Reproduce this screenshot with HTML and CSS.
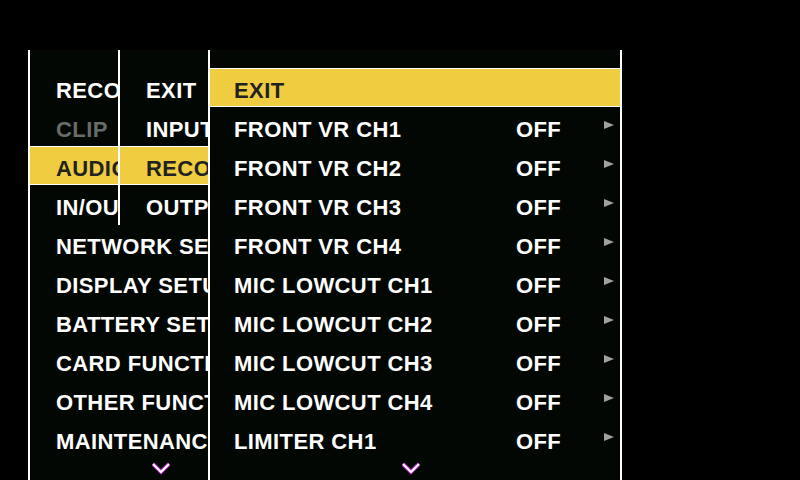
FILE: index.html
```html
<!DOCTYPE html>
<html lang="en">
<head>
    <meta charset="UTF-8">
    <title>Audio Menu</title>
    <link rel="stylesheet" href="styles.css">
</head>
<body>
    <div class="screen">
        <!-- top level menu -->
        <div class="panel panel-main">
            <ul class="menu">
                <li>RECORDING SETUP</li>
                <li class="dim">CLIP</li>
                <li class="sel">AUDIO SETUP</li>
                <li>IN/OUT SELECT</li>
                <li>NETWORK SETUP</li>
                <li>DISPLAY SETUP</li>
                <li>BATTERY SETUP</li>
                <li>CARD FUNCTIONS</li>
                <li>OTHER FUNCTIONS</li>
                <li>MAINTENANCE</li>
            </ul>
            <div class="more more-main"><svg width="20" height="13" viewBox="0 0 20 13"><polyline points="2,2 10,10 18,2" fill="none" stroke="#b020c0" stroke-width="4"/><polyline points="2,2 10,10 18,2" fill="none" stroke="#fff" stroke-width="2"/></svg></div>
        </div>

        <!-- audio submenu -->
        <div class="panel panel-sub">
            <ul class="menu">
                <li>EXIT</li>
                <li>INPUT SETTINGS</li>
                <li class="sel">RECORDING CH SETTINGS</li>
                <li>OUTPUT SETTINGS</li>
            </ul>
        </div>

        <!-- recording channel settings -->
        <div class="panel panel-items">
            <ul class="menu">
                <li class="sel">EXIT</li>
                <li><span class="name">FRONT VR CH1</span><span class="val">OFF</span><span class="arrow"></span></li>
                <li><span class="name">FRONT VR CH2</span><span class="val">OFF</span><span class="arrow"></span></li>
                <li><span class="name">FRONT VR CH3</span><span class="val">OFF</span><span class="arrow"></span></li>
                <li><span class="name">FRONT VR CH4</span><span class="val">OFF</span><span class="arrow"></span></li>
                <li><span class="name">MIC LOWCUT CH1</span><span class="val">OFF</span><span class="arrow"></span></li>
                <li><span class="name">MIC LOWCUT CH2</span><span class="val">OFF</span><span class="arrow"></span></li>
                <li><span class="name">MIC LOWCUT CH3</span><span class="val">OFF</span><span class="arrow"></span></li>
                <li><span class="name">MIC LOWCUT CH4</span><span class="val">OFF</span><span class="arrow"></span></li>
                <li><span class="name">LIMITER CH1</span><span class="val">OFF</span><span class="arrow"></span></li>
            </ul>
            <div class="more more-items"><svg width="20" height="13" viewBox="0 0 20 13"><polyline points="2,2 10,10 18,2" fill="none" stroke="#b020c0" stroke-width="4"/><polyline points="2,2 10,10 18,2" fill="none" stroke="#fff" stroke-width="2"/></svg></div>
        </div>
    </div>
</body>
</html>
```

FILE: styles.css
```css
body {
    margin: 0;
    background: #000;
    font-family: "Liberation Sans", Arial, sans-serif;
    font-weight: bold;
}
.screen {
    position: relative;
    width: 800px;
    height: 480px;
    overflow: hidden;
    background: #000;
}
.panel {
    position: absolute;
    top: 50px;
    background: #030703;
    border-left: 2px solid #fff;
    padding-top: 18px;
    overflow: hidden;
    box-sizing: border-box;
}
.panel-main {
    left: 28px;
    width: 270px;
    height: 430px;
}
.panel-sub {
    left: 118px;
    width: 92px;
    height: 175px;
}
.panel-items {
    left: 208px;
    width: 414px;
    height: 430px;
    border-right: 2px solid #fff;
}
.menu {
    list-style: none;
    margin: 0;
    padding: 0;
}
.menu li {
    display: flex;
    align-items: center;
    height: 39px;
    padding: 7px 0 0 26px;
    box-sizing: border-box;
    color: #fff;
    font-size: 22px;
    letter-spacing: 0.4px;
    white-space: nowrap;
}
.panel-items .menu li {
    padding-left: 24px;
}
.menu li.dim {
    color: #686c68;
}
.menu li.sel {
    background: #f0cd40;
    color: #222;
    border-top: 1px solid #fff;
    border-bottom: 1px solid #fff;
}
.name {
    width: 282px;
}
.val {
    width: 88px;
}
.arrow {
    width: 0;
    height: 0;
    margin-top: -11px;
    border-top: 4px solid transparent;
    border-bottom: 4px solid transparent;
    border-left: 10px solid #a0a0a0;
}
.more {
    display: flex;
    margin-top: 4px;
}
.more-main {
    padding-left: 121px;
}
.more-items {
    padding-left: 191px;
}
```
